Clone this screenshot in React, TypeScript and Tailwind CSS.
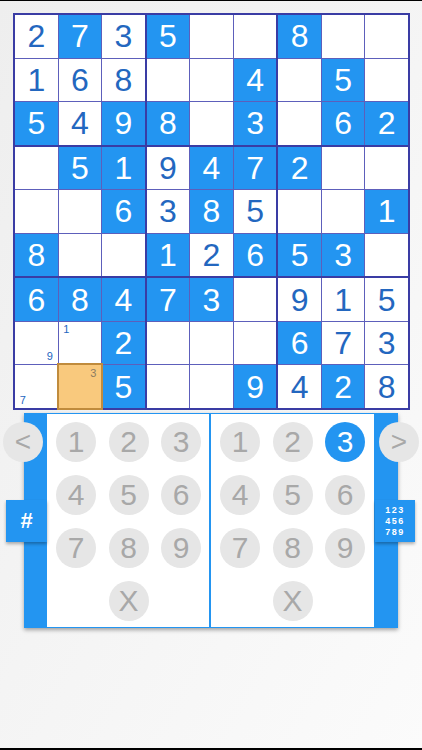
import React from 'react';

const VALUES = [
  '2735..8..',
  '168..4.5.',
  '5498.3.62',
  '.519472..',
  '..6385..1',
  '8..12653.',
  '68473.915',
  '..2...673',
  '..5..9428',
];

const BLUE = [
  '010100100',
  '000001010',
  '101101011',
  '011011100',
  '001010001',
  '100101110',
  '111110000',
  '001000100',
  '001001010',
];

const NOTES: Record<string, number[]> = {
  '7-0': [9],
  '7-1': [1],
  '8-0': [7],
  '8-1': [3],
};

const SELECTED = '8-1';

function Cell({ r, c }: { r: number; c: number }) {
  const v = VALUES[r][c];
  const blue = BLUE[r][c] === '1';
  const key = `${r}-${c}`;
  const notes = NOTES[key];
  const selected = key === SELECTED;

  return (
    <div
      className={`relative flex items-center justify-center text-[32px] leading-none ${
        blue ? 'bg-[#2395f1] text-white' : 'bg-white text-[#2367bf]'
      }`}
    >
      {selected ? (
        <div className="absolute -inset-[2px] z-10 border-2 border-[#c08b3c] bg-[#f9c97d]" />
      ) : null}
      {v !== '.' ? <span>{v}</span> : null}
      {notes ? (
        <div className="absolute inset-0 z-20 grid grid-cols-3 grid-rows-3 p-[1px] text-[11px] font-medium leading-none">
          {[1, 2, 3, 4, 5, 6, 7, 8, 9].map((n) => (
            <span
              key={n}
              className={`flex items-center justify-center ${selected ? 'text-[#8c7c62]' : 'text-[#2367bf]'}`}
            >
              {notes.includes(n) ? n : ''}
            </span>
          ))}
        </div>
      ) : null}
    </div>
  );
}

function Board() {
  return (
    <div className="ml-[13px] mt-[12px] grid h-[397px] w-[397px] grid-cols-3 grid-rows-3 gap-[2px] bg-[#3a3ca4] p-[2px]">
      {[0, 1, 2].map((br) =>
        [0, 1, 2].map((bc) => (
          <div key={`${br}-${bc}`} className="grid grid-cols-3 grid-rows-3 gap-px bg-[#5d5fbb]">
            {[0, 1, 2].map((ir) =>
              [0, 1, 2].map((ic) => <Cell key={`${ir}-${ic}`} r={br * 3 + ir} c={bc * 3 + ic} />)
            )}
          </div>
        ))
      )}
    </div>
  );
}

function PadButton({ label, active }: { label: string; active?: boolean }) {
  return (
    <div
      className={`flex h-[40px] w-[40px] items-center justify-center rounded-full text-[30px] leading-none ${
        active ? 'bg-[#2395f1] text-white' : 'bg-[#e6e6e6] text-[#a8a8a8]'
      }`}
    >
      {label}
    </div>
  );
}

function Pad({ active }: { active?: string }) {
  return (
    <div className="grid h-full grid-cols-[40px_40px_40px] content-start gap-x-[12.5px] gap-y-[13px] bg-white pl-[9px] pt-[8px]">
      {['1', '2', '3', '4', '5', '6', '7', '8', '9'].map((n) => (
        <PadButton key={n} label={n} active={n === active} />
      ))}
      <div />
      <PadButton label="X" />
    </div>
  );
}

export default function App() {
  return (
    <div
      className="flex h-[750px] w-[422px] flex-col bg-linear-to-br from-[#eeeeee] to-[#fbfbfb]"
      style={{ fontFamily: '"Liberation Sans", Arial, sans-serif' }}
    >
      <div className="h-px bg-black" />
      <Board />
      <div className="relative ml-[24px] mt-[3px] flex h-[215px] w-[374px] bg-[#2395f1] shadow-[0_2px_4px_rgba(0,0,0,0.35)]">
        <div className="w-[23px]" />
        <div className="w-[162px] py-px">
          <Pad />
        </div>
        <div className="w-[2px]" />
        <div className="w-[163px] py-px">
          <Pad active="3" />
        </div>
        <div className="w-[24px]" />

        <div className="absolute left-[-21px] top-[9px] flex h-[40px] w-[40px] items-center justify-center rounded-full bg-[#e6e6e6] text-[28px] leading-none text-[#a8a8a8]">
          &lt;
        </div>
        <div className="absolute left-[355px] top-[9px] flex h-[40px] w-[40px] items-center justify-center rounded-full bg-[#e6e6e6] text-[28px] leading-none text-[#a8a8a8]">
          &gt;
        </div>
        <div className="absolute left-[-18px] top-[87px] flex h-[42px] w-[41px] items-center justify-center bg-[#2395f1] text-[22px] font-bold leading-none text-white shadow-[0_2px_3px_rgba(0,0,0,0.3)]">
          #
        </div>
        <div className="absolute left-[351px] top-[87px] flex h-[42px] w-[40px] flex-col items-center justify-center bg-[#2395f1] text-[9px] font-bold leading-[11px] tracking-[1.5px] text-white shadow-[0_2px_3px_rgba(0,0,0,0.3)]">
          <span>123</span>
          <span>456</span>
          <span>789</span>
        </div>
      </div>
      <div className="flex-1" />
      <div className="h-[2px] bg-black" />
    </div>
  );
}
